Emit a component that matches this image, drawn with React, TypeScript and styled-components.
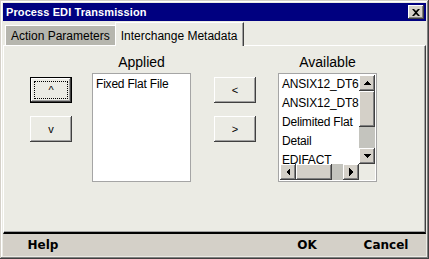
import React from 'react';
import styled, { createGlobalStyle, css } from 'styled-components';

const GlobalStyle = createGlobalStyle`
    html, body {
        margin: 0;
        padding: 0;
        overflow: hidden;
        background: #d4d0c8;
    }
`;

const FACE = '#ebebe4';

const Window = styled.div`
    box-sizing: border-box;
    width: 429px;
    height: 259px;
    padding: 3px;
    display: flex;
    flex-direction: column;
    background: ${FACE};
    box-shadow: inset -1px -1px #404040, inset 1px 1px #d4d0c8, inset -2px -2px #808080,
        inset 2px 2px #ffffff;
    font-family: 'Liberation Sans', Arial, sans-serif;
    color: #000;
`;

const TitleBar = styled.div`
    height: 18px;
    flex: none;
    display: flex;
    align-items: center;
    justify-content: space-between;
    padding: 0 2px 0 3px;
    background: #000080;
`;

const Title = styled.span`
    color: #fff;
    font-weight: bold;
    font-size: 11px;
    letter-spacing: 0.1px;
`;

const CloseButton = styled.div`
    box-sizing: border-box;
    width: 16px;
    height: 14px;
    display: flex;
    align-items: center;
    justify-content: center;
    background: #d4d0c8;
    box-shadow: inset -1px -1px #404040, inset 1px 1px #ffffff, inset -2px -2px #808080;
`;

const TabStrip = styled.div`
    height: 24px;
    flex: none;
    display: flex;
    align-items: flex-end;
    padding-left: 2px;
`;

const Tab = styled.div<{ $active?: boolean }>`
    box-sizing: border-box;
    font-size: 12px;
    line-height: 20px;
    white-space: nowrap;
    border-top: 1px solid #fff;
    border-left: 1px solid #fff;
    ${p =>
        p.$active
            ? css`
                  height: 24px;
                  padding: 3px 6px 0 5px;
                  background: ${FACE};
                  border-right: 1px solid #404040;
                  box-shadow: inset -1px 0 #a0a0a0;
                  margin-bottom: -1px;
                  position: relative;
              `
            : css`
                  height: 20px;
                  padding: 0 5px 0 5px;
                  background: #b6b6ae;
              `}
`;

const Panel = styled.div`
    flex: 1;
    min-height: 0;
    border-top: 1px solid #fff;
    border-left: 1px solid #fff;
    border-right: 1px solid #404040;
    border-bottom: 2px solid #000;
    box-shadow: inset -1px -1px #a0a0a0;
    padding: 8px 0 0 26px;
`;

const Columns = styled.div`
    display: flex;
    align-items: flex-start;
`;

const ButtonColumn = styled.div<{ $gap: number }>`
    display: flex;
    flex-direction: column;
    gap: 13px;
    padding-top: 23px;
    margin-right: ${p => p.$gap}px;
`;

const MoveButton = styled.div<{ $focused?: boolean }>`
    box-sizing: border-box;
    width: 42px;
    height: 26px;
    display: flex;
    align-items: center;
    justify-content: center;
    font-size: 11px;
    background: ${FACE};
    position: relative;
    box-shadow: inset -1px -1px #404040, inset 1px 1px #ffffff, inset -2px -2px #a0a0a0;
    ${p =>
        p.$focused &&
        css`
            border: 1px solid #000;
            &::after {
                content: '';
                position: absolute;
                inset: 3px;
                border: 1px dotted #000;
            }
        `}
`;

const ListColumn = styled.div<{ $gap: number }>`
    display: flex;
    flex-direction: column;
    align-items: center;
    gap: 3px;
    margin-right: ${p => p.$gap}px;
`;

const ListLabel = styled.div`
    font-size: 14px;
    line-height: 16px;
`;

const ListBox = styled.div<{ $scroll?: boolean }>`
    box-sizing: border-box;
    width: 99px;
    height: 109px;
    border: 1px solid #a5a5a5;
    padding: 1px;
    background: #fff;
    display: grid;
    grid-template-columns: ${p => (p.$scroll ? '1fr 16px' : '1fr')};
    grid-template-rows: ${p => (p.$scroll ? '1fr 16px' : '1fr')};
`;

const Viewport = styled.div`
    overflow: hidden;
    min-width: 0;
    min-height: 0;
`;

const ListItem = styled.div`
    font-size: 12px;
    letter-spacing: -0.2px;
    line-height: 19px;
    padding-left: 2px;
    white-space: nowrap;
`;

const ScrollBar = styled.div<{ $horizontal?: boolean }>`
    display: flex;
    flex-direction: ${p => (p.$horizontal ? 'row' : 'column')};
    background: #c4c4be;
`;

const Bevel = css`
    background: #d4d0c8;
    box-shadow: inset -1px -1px #404040, inset 1px 1px #ffffff, inset -2px -2px #808080;
`;

const Arrow = styled.div`
    width: 16px;
    height: 16px;
    flex: none;
    display: flex;
    align-items: center;
    justify-content: center;
    ${Bevel};
`;

const Thumb = styled.div<{ $horizontal?: boolean }>`
    flex: none;
    ${p => (p.$horizontal ? 'width: 36px; height: 16px;' : 'height: 36px; width: 16px;')}
    ${Bevel};
`;

const Track = styled.div`
    flex: 1;
`;

const Corner = styled.div`
    background: ${FACE};
`;

const Footer = styled.div`
    height: 22px;
    flex: none;
    display: flex;
    align-items: center;
    padding: 0 5px;
    background: #d4d0c8;
    font-family: 'DejaVu Sans', Verdana, sans-serif;
`;

const FooterButton = styled.div<{ $ml: string }>`
    width: 70px;
    text-align: center;
    font-size: 12px;
    font-weight: bold;
    line-height: 22px;
    margin-left: ${p => p.$ml};
`;

const Tri = ({ dir }: { dir: 'up' | 'down' | 'left' | 'right' }) => {
    const pts = {
        up: '4,1 0,5 8,5',
        down: '0,1 8,1 4,5',
        left: '5,0 5,8 1,4',
        right: '1,0 1,8 5,4',
    }[dir];
    const horiz = dir === 'left' || dir === 'right';
    return (
        <svg width={horiz ? 6 : 8} height={horiz ? 8 : 6} viewBox={horiz ? '0 0 6 8' : '0 0 8 6'}>
            <polygon points={pts} fill="#000" shapeRendering="crispEdges" />
        </svg>
    );
};

const applied = ['Fixed Flat File'];
const available = ['ANSIX12_DT6', 'ANSIX12_DT8', 'Delimited Flat', 'Detail', 'EDIFACT'];

const App = () => (
    <>
        <GlobalStyle />
        <Window>
            <TitleBar>
                <Title>Process EDI Transmission</Title>
                <CloseButton>
                    <svg width="8" height="7" viewBox="0 0 8 7">
                        <path d="M0 0h2l2 2 2-2h2L5 3.5 8 7H6L4 5 2 7H0l3-3.5z" fill="#000" />
                    </svg>
                </CloseButton>
            </TitleBar>
            <TabStrip>
                <Tab>Action Parameters</Tab>
                <Tab $active>Interchange Metadata</Tab>
            </TabStrip>
            <Panel>
                <Columns>
                    <ButtonColumn $gap={20}>
                        <MoveButton $focused>^</MoveButton>
                        <MoveButton>v</MoveButton>
                    </ButtonColumn>
                    <ListColumn $gap={23}>
                        <ListLabel>Applied</ListLabel>
                        <ListBox>
                            <Viewport>
                                {applied.map(a => (
                                    <ListItem key={a}>{a}</ListItem>
                                ))}
                            </Viewport>
                        </ListBox>
                    </ListColumn>
                    <ButtonColumn $gap={22}>
                        <MoveButton>&lt;</MoveButton>
                        <MoveButton>&gt;</MoveButton>
                    </ButtonColumn>
                    <ListColumn $gap={0}>
                        <ListLabel>Available</ListLabel>
                        <ListBox $scroll>
                            <Viewport>
                                {available.map(a => (
                                    <ListItem key={a}>{a}</ListItem>
                                ))}
                            </Viewport>
                            <ScrollBar>
                                <Arrow>
                                    <Tri dir="up" />
                                </Arrow>
                                <Thumb />
                                <Track />
                                <Arrow>
                                    <Tri dir="down" />
                                </Arrow>
                            </ScrollBar>
                            <ScrollBar $horizontal>
                                <Arrow>
                                    <Tri dir="left" />
                                </Arrow>
                                <Thumb $horizontal />
                                <Track />
                                <Arrow>
                                    <Tri dir="right" />
                                </Arrow>
                            </ScrollBar>
                            <Corner />
                        </ListBox>
                    </ListColumn>
                </Columns>
            </Panel>
            <Footer>
                <FooterButton $ml="0">Help</FooterButton>
                <FooterButton $ml="auto">OK</FooterButton>
                <FooterButton $ml="9px">Cancel</FooterButton>
            </Footer>
        </Window>
    </>
);

export default App;
